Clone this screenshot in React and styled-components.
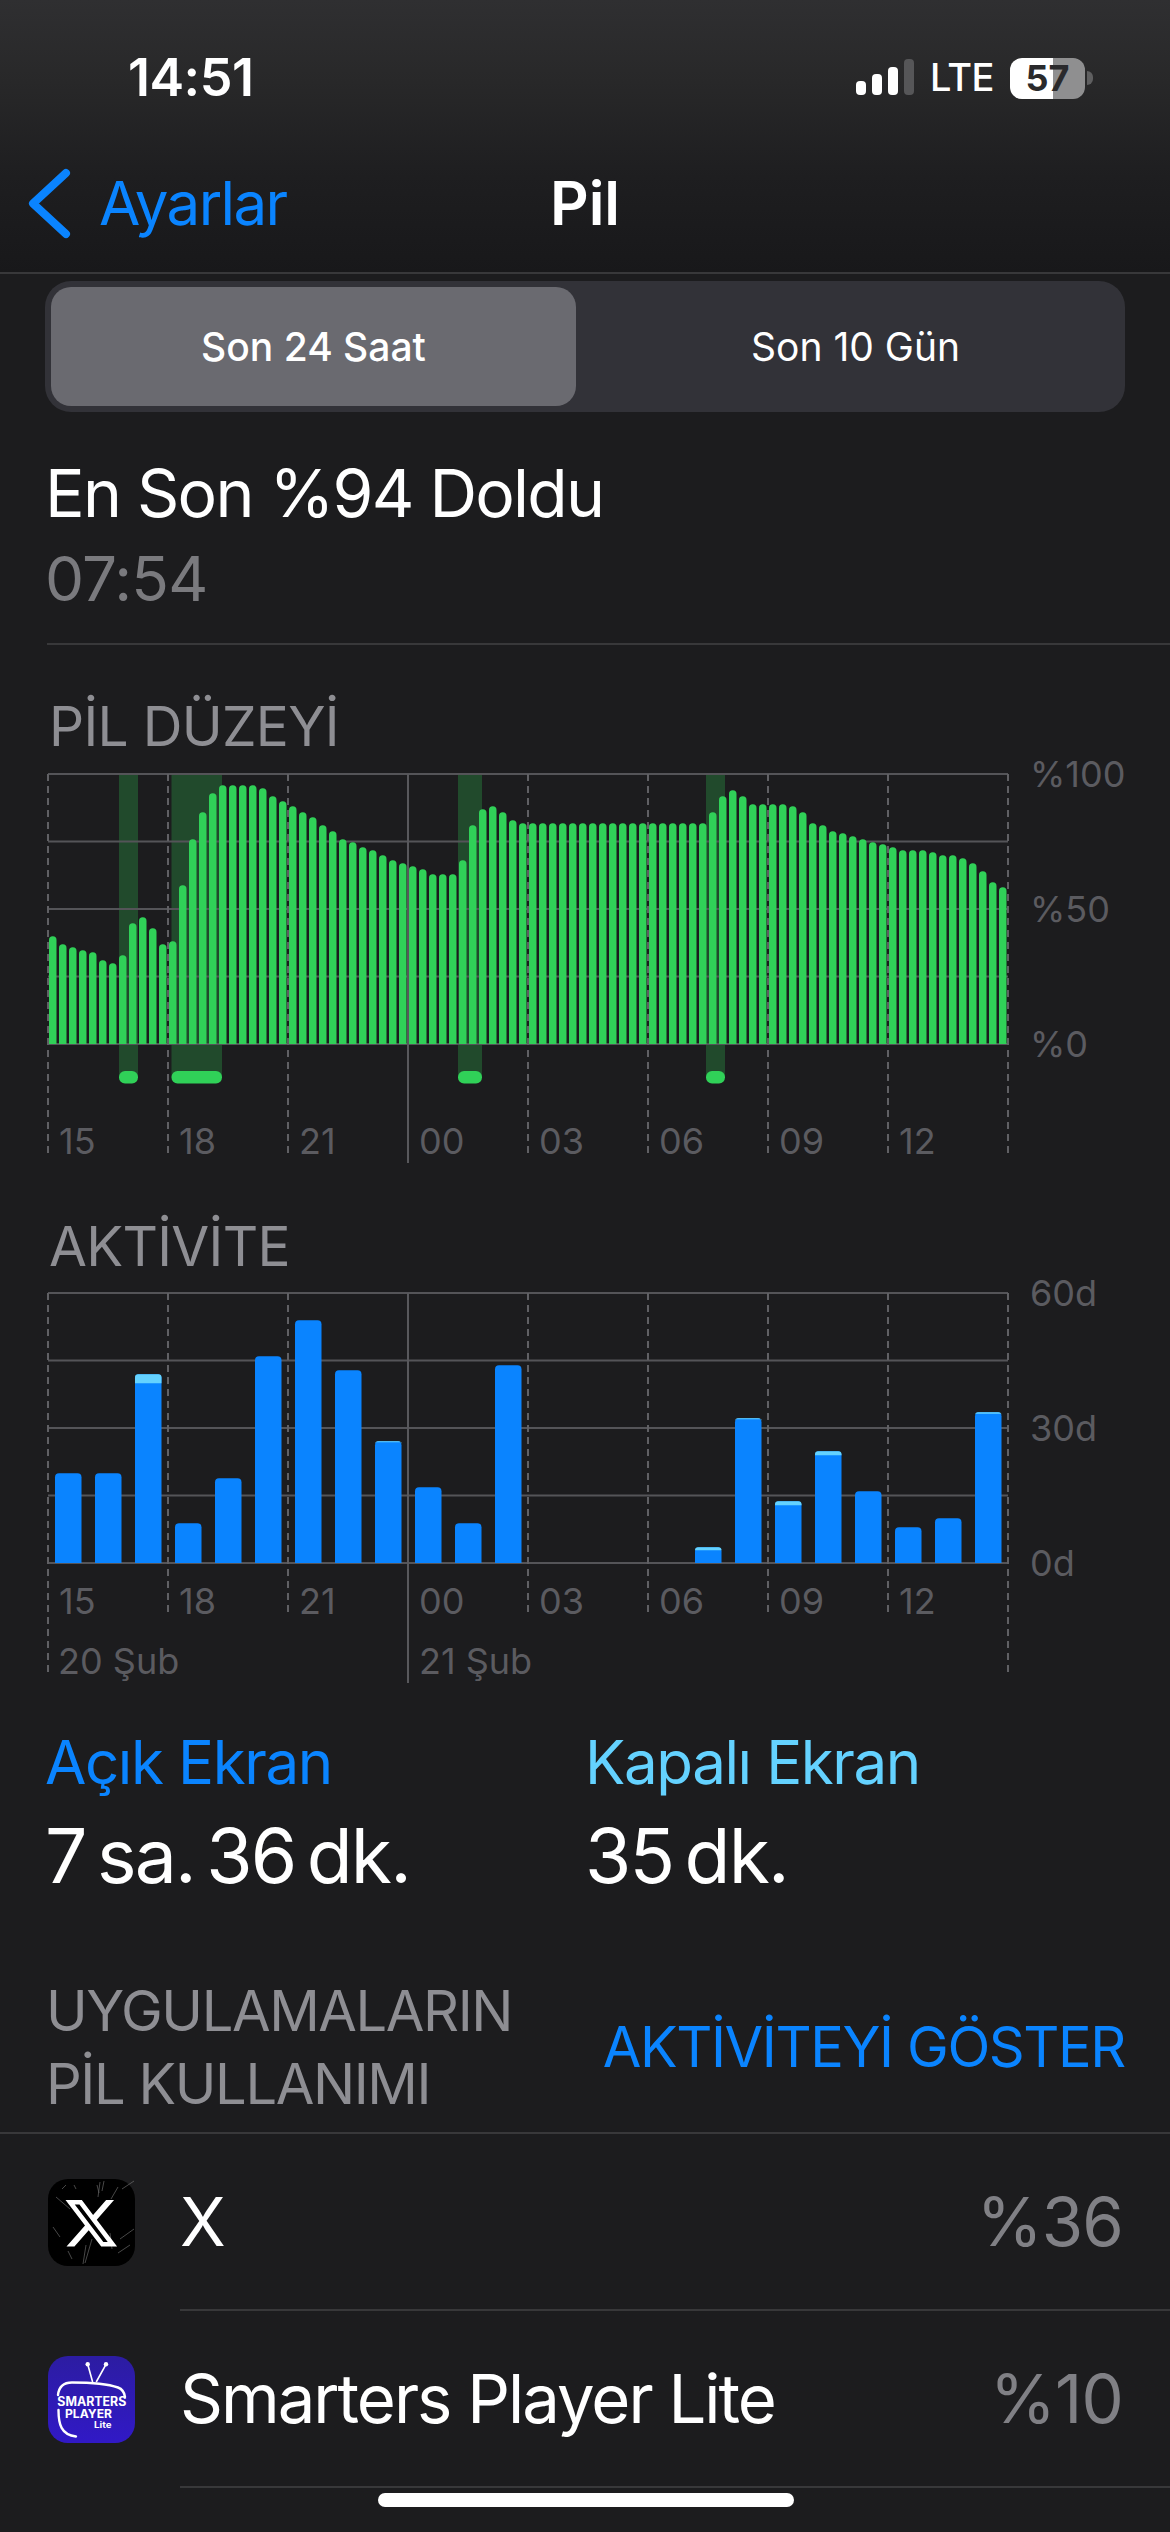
import React from "react";
import styled, { createGlobalStyle } from "styled-components";

const Global = createGlobalStyle`
  html, body { margin: 0; padding: 0; background: #1c1c1e; }
  * { box-sizing: border-box; }
`;

const FONT = `Inter, "Noto Sans", "Liberation Sans", sans-serif`;

const Page = styled.div`
  position: relative;
  width: 1170px;
  height: 2532px;
  overflow: hidden;
  background: #1c1c1e;
  color: #fff;
  font-family: ${FONT};
`;

const Header = styled.header`
  height: 274px;
  background: linear-gradient(180deg, #2f2f31 0%, #282829 30%, #1e1e20 65%, #18181a 100%);
  border-bottom: 2px solid #38383a;
`;

const StatusBar = styled.div`
  height: 152px;
  padding: 47px 0 0 128px;
  display: flex;
  justify-content: space-between;
`;

const Clock = styled.div`
  font-size: 52px;
  line-height: 62px;
  font-weight: 600;
  letter-spacing: -0.5px;
`;

const StatusIcons = styled.div`
  width: 229px;
  height: 42px;
  margin: 10px 85px 0 0;
  display: flex;
  align-items: flex-end;
`;

const SignalBars = styled.div`
  display: flex;
  align-items: flex-end;
  gap: 6px;
  height: 36px;
  margin-bottom: 4px;
`;

const SignalBar = styled.span`
  width: 10px;
  height: ${(p) => p.$h}px;
  border-radius: 4px;
  background: ${(p) => (p.$off ? "#565658" : "#fff")};
`;

const Lte = styled.span`
  margin-left: 16px;
  font-size: 38px;
  line-height: 42px;
  font-weight: 500;
  letter-spacing: -0.6px;
  height: 42px;
  transform: translateY(-1px);
`;

const Battery = styled.div`
  margin-left: auto;
  position: relative;
  width: 75px;
  height: 41px;
  border-radius: 12px;
  background: linear-gradient(90deg, #fff 0 57%, #8f8f90 57% 100%);
  color: #2a2a2c;
  font-size: 36px;
  font-weight: 700;
  line-height: 41px;
  text-align: center;
  &::after {
    content: "";
    position: absolute;
    right: -8px;
    top: 13px;
    width: 6px;
    height: 14px;
    border-radius: 0 7px 7px 0;
    background: #5f5f60;
  }
`;

const NavBar = styled.nav`
  position: relative;
  height: 120px;
  display: flex;
  align-items: flex-start;
  padding: 15px 0 0 26px;
`;

const BackChevron = styled.svg`
  width: 46px;
  height: 72px;
  display: block;
`;

const BackLabel = styled.span`
  margin-left: 27px;
  font-size: 60px;
  line-height: 72px;
  color: #0a84ff;
  letter-spacing: -1.6px;
`;

const NavTitle = styled.h1`
  position: absolute;
  left: 0;
  right: 0;
  top: 15px;
  margin: 0;
  text-align: center;
  font-size: 60px;
  line-height: 72px;
  font-weight: 600;
`;

const Segment = styled.div`
  margin: 7px 45px 0;
  height: 131px;
  padding: 6px;
  border-radius: 26px;
  background: #323238;
  display: grid;
  grid-template-columns: 525px 1fr;
`;

const SegmentItem = styled.div`
  display: flex;
  align-items: center;
  justify-content: center;
  border-radius: 20px;
  font-size: 39px;
  font-weight: ${(p) => (p.$active ? 500 : 400)};
  background: ${(p) => (p.$active ? "#6a6a70" : "transparent")};
  padding-left: ${(p) => (p.$active ? "0" : "16px")};
`;

const Summary = styled.section`
  margin-left: 47px;
  height: 233px;
  padding-top: 41px;
  border-bottom: 2px solid #38383a;
`;

const SummaryTitle = styled.div`
  margin-left: -2px;
  font-size: 66px;
  line-height: 80px;
  letter-spacing: -1.75px;
`;

const SummaryTime = styled.div`
  margin: 10px 0 0 -2px;
  font-size: 62px;
  line-height: 72px;
  color: #7a7a7e;
  letter-spacing: -0.8px;
`;

const SectionTitle = styled.h2`
  margin: 0;
  padding-left: 49px;
  font-size: 55px;
  line-height: 60px;
  font-weight: 400;
  color: #8e8e93;
  letter-spacing: -0.7px;
  height: ${(p) => p.$h}px;
  padding-top: ${(p) => p.$top}px;
`;

const ChartSvg = styled.svg`
  display: block;
  width: 1170px;
  height: 420px;
`;

const GridLine = styled.line`
  stroke: #545458;
  stroke-width: 2;
`;

const DashLine = styled.line`
  stroke: #606064;
  stroke-width: 2;
  stroke-dasharray: 7 5;
`;

const SolidVLine = styled.line`
  stroke: #58585c;
  stroke-width: 2;
`;

const AxisText = styled.text`
  font-family: ${FONT};
  font-size: 36px;
  fill: #5b5b60;
`;

const Band = styled.rect`
  fill: #214a2c;
`;

const Chip = styled.rect`
  fill: #30d158;
`;

const GreenBar = styled.path`
  fill: #30d158;
`;

const BlueBar = styled.path`
  fill: #0a84ff;
`;

const LightBar = styled.path`
  fill: #64d2ff;
`;

const Stats = styled.section`
  display: grid;
  grid-template-columns: 540px 1fr;
  padding: 38px 0 0 45px;
  height: 271px;
`;

const StatLabel = styled.div`
  font-size: 60px;
  line-height: 70px;
  color: ${(p) => p.$color};
  letter-spacing: -1.4px;
`;

const StatValue = styled.div`
  margin-top: 17px;
  font-size: 75px;
  line-height: 84px;
  font-weight: 400;
  letter-spacing: -1.8px;
  word-spacing: -8px;
`;

const UsageHead = styled.div`
  display: flex;
  align-items: center;
  justify-content: space-between;
  padding: 3px 45px 0 46px;
  height: 174px;
  border-bottom: 2px solid #38383a;
`;

const UsageTitle = styled.div`
  font-size: 56px;
  line-height: 73px;
  color: #8e8e93;
  letter-spacing: -1.4px;
`;

const UsageLink = styled.div`
  font-size: 56px;
  line-height: 71px;
  color: #0a84ff;
  letter-spacing: -1.4px;
`;

const AppRow = styled.div`
  display: flex;
  align-items: center;
  padding-left: 48px;
  height: 177px;
`;

const AppIcon = styled.svg`
  width: 87px;
  height: 87px;
  flex: none;
  display: block;
`;

const AppBody = styled.div`
  flex: 1;
  margin-left: 45px;
  height: 177px;
  display: flex;
  align-items: center;
  justify-content: space-between;
  padding-right: 47px;
  border-bottom: 2px solid #38383a;
`;

const AppName = styled.span`
  font-size: 67px;
  letter-spacing: -2px;
`;

const AppPercent = styled.span`
  font-size: 67px;
  color: #808085;
  letter-spacing: -0.8px;
`;

const HomeBar = styled.div`
  position: absolute;
  left: 378px;
  bottom: 25px;
  width: 416px;
  height: 14px;
  border-radius: 7px;
  background: #fff;
`;

const IconText = styled.text`
  font-family: ${FONT};
  font-weight: 700;
  fill: #fff;
`;

const BATTERY_TOPS = [
  769,793,802,811,817,841,850,826,730,712,745,793,784,616,478,397,340,316,316,316,316,325,349,364,
  379,397,412,436,454,478,487,502,511,526,541,550,559,568,583,583,583,541,436,388,379,397,421,430,
  430,430,430,430,430,430,430,430,430,430,430,430,430,430,430,430,430,430,397,349,331,349,373,373,
  373,373,379,397,430,436,454,460,469,478,487,493,502,511,511,511,517,526,526,535,550,574,607,622,
];

const ACTIVITY = [
  [819],[819],[522,549],[969],[834],[468],[360],[510],[723,726],[861],[969],[495],
  null,null,null,null,
  [1041,1050],[654,657],[903,915],[753,765],[873],[981],[954],[636,640],
];

const topRounded = (x, y, w, h, r) =>
  `M${x} ${y + h}V${y + r}Q${x} ${y} ${x + r} ${y}H${x + w - r}Q${x + w} ${y} ${x + w} ${y + r}V${y + h}Z`;

const HOURS = ["15", "18", "21", "00", "03", "06", "09", "12"];
const VX = [48, 168, 288, 408, 528, 648, 768, 888, 1008];
const TOP = 24;
const BASE = TOP + 270;

function ChartFrame({ bottoms, labelY, right, children, under }) {
  return (
    <>
      {under}
      {[0, 1, 2, 3, 4].map((i) => (
        <GridLine key={i} x1={48} x2={1008} y1={TOP + i * 67.5} y2={TOP + i * 67.5} />
      ))}
      {children}
      {VX.map((x, i) =>
        x === 408 ? (
          <SolidVLine key={x} x1={x} x2={x} y1={TOP} y2={bottoms.solid} />
        ) : (
          <DashLine key={x} x1={x} x2={x} y1={TOP} y2={i === 0 || i === 8 ? bottoms.edge : bottoms.inner} />
        )
      )}
      {HOURS.map((h, i) => (
        <AxisText key={h} x={VX[i] + 11} y={labelY}>{h}</AxisText>
      ))}
      {right.map((t, i) => (
        <AxisText key={t} x={1030} y={TOP + i * 135 + 13}>{t}</AxisText>
      ))}
    </>
  );
}

function BatteryChart() {
  const bands = [[119, 19], [171.5, 50.5], [458, 24], [706, 19]];
  return (
    <ChartSvg viewBox="0 0 1170 420">
      <ChartFrame
        bottoms={{ inner: 407, edge: 407, solid: 413 }}
        labelY={404}
        right={["%100", "%50", "%0"]}
        under={bands.map(([x, w]) => (
          <Band key={x} x={x} y={TOP} width={w} height={303} />
        ))}
      >
        {BATTERY_TOPS.map((t, i) => {
          const h = (1092 - t) / 3;
          return <GreenBar key={i} d={topRounded(49 + i * 10, BASE - h, 7.5, h, 3.7)} />;
        })}
        {bands.map(([x, w]) => (
          <Chip key={x} x={x} y={321} width={w} height={12.5} rx={6} />
        ))}
      </ChartFrame>
    </ChartSvg>
  );
}

function ActivityChart() {
  return (
    <ChartSvg viewBox="0 0 1170 420">
      <ChartFrame
        bottoms={{ inner: 348, edge: 408, solid: 414 }}
        labelY={345}
        right={["60d", "30d", "0d"]}
      >
        {ACTIVITY.map((v, i) => {
          if (!v) return null;
          const x = 55 + i * 40;
          const h = (1088 - v[0]) / 3;
          const y = BASE - h;
          return (
            <g key={i}>
              <BlueBar d={topRounded(x, y, 26.5, h, 4)} />
              {v[1] ? <LightBar d={`M${x} ${y + (v[1] - v[0]) / 3}V${y + 3}Q${x} ${y} ${x + 3} ${y}H${x + 23.5}Q${x + 26.5} ${y} ${x + 26.5} ${y + 3}V${y + (v[1] - v[0]) / 3}Z`} /> : null}
            </g>
          );
        })}
      </ChartFrame>
      <AxisText x={58} y={405}>20 Şub</AxisText>
      <AxisText x={419} y={405}>21 Şub</AxisText>
    </ChartSvg>
  );
}

const SCRATCHES = [
  "M52 3 L50 18 M56 2 L54 12 M49 6 L51 14", "M38 66 L35 85 M44 60 L37 84", "M70 8 L63 20 M74 10 L86 2",
  "M72 60 L86 50 M70 74 L82 66", "M8 18 L22 30 M5 48 L12 58", "M62 54 L64 70 M20 72 L24 80", "M26 6 L28 10 M14 10 L18 6",
];

function XIcon() {
  return (
    <AppIcon viewBox="0 0 87 87">
      <rect width="87" height="87" rx="20" fill="#000" />
      <g stroke="#8a8a8a" strokeWidth="0.7" fill="none" opacity="0.75">
        {SCRATCHES.map((d) => <path key={d} d={d} />)}
      </g>
      <path
        transform="translate(17.5 18.5) scale(2.15)"
        fill="#fff"
        d="M18.901 1.153h3.68l-8.04 9.19L24 22.846h-7.406l-5.8-7.584-6.638 7.584H.474l8.6-9.83L0 1.154h7.594l5.243 6.932ZM17.61 20.644h2.039L6.486 3.24H4.298Z"
      />
    </AppIcon>
  );
}

function SmartersIcon() {
  return (
    <AppIcon viewBox="0 0 87 87">
      <defs>
        <linearGradient id="sm" x1="0" y1="0" x2="0" y2="1">
          <stop offset="0" stopColor="#2c1ca2" />
          <stop offset="1" stopColor="#3119c6" />
        </linearGradient>
      </defs>
      <rect width="87" height="87" rx="20" fill="url(#sm)" />
      <g stroke="#fff" fill="none" strokeLinecap="round">
        <path d="M39.7 8.3 L44.5 25.5 M58 8.3 L48.5 25.5" strokeWidth="1.6" />
        <path d="M10 39 C11 30 16 26.5 24 26.5 C42 26.5 60 28 70 31.5 C74 33 76.5 37 77 41" strokeWidth="2.4" />
        <path d="M10.5 54 C10.5 68 13 79 28 80.5" strokeWidth="2.4" />
      </g>
      <circle cx="39.7" cy="8.3" r="2.2" fill="#fff" />
      <circle cx="58" cy="8.3" r="2.2" fill="#fff" />
      <IconText x="9.3" y="50" fontSize="12.5" textLength="69" lengthAdjust="spacingAndGlyphs">SMARTERS</IconText>
      <IconText x="17" y="62.3" fontSize="11.5" textLength="47" lengthAdjust="spacingAndGlyphs">PLAYER</IconText>
      <IconText x="46" y="72.3" fontSize="9" fontWeight="500" textLength="17.5" lengthAdjust="spacingAndGlyphs">Lite</IconText>
    </AppIcon>
  );
}

export default function App() {
  return (
    <Page>
      <Global />
      <Header>
        <StatusBar>
          <Clock>14:51</Clock>
          <StatusIcons>
            <SignalBars>
              <SignalBar $h={14} />
              <SignalBar $h={21} />
              <SignalBar $h={28} />
              <SignalBar $h={36} $off />
            </SignalBars>
            <Lte>LTE</Lte>
            <Battery>57</Battery>
          </StatusIcons>
        </StatusBar>
        <NavBar>
          <BackChevron viewBox="0 0 46 72">
            <path d="M40 6 L7 36.5 L40 67" fill="none" stroke="#0a84ff" strokeWidth="8" strokeLinecap="round" strokeLinejoin="round" />
          </BackChevron>
          <BackLabel>Ayarlar</BackLabel>
          <NavTitle>Pil</NavTitle>
        </NavBar>
      </Header>

      <Segment>
        <SegmentItem $active>Son 24 Saat</SegmentItem>
        <SegmentItem>Son 10 Gün</SegmentItem>
      </Segment>

      <Summary>
        <SummaryTitle>En Son %94 Doldu</SummaryTitle>
        <SummaryTime>07:54</SummaryTime>
      </Summary>

      <SectionTitle $h={105} $top={51}>PİL DÜZEYİ</SectionTitle>
      <BatteryChart />
      <SectionTitle $h={99} $top={46}>AKTİVİTE</SectionTitle>
      <ActivityChart />

      <Stats>
        <div>
          <StatLabel $color="#0a84ff">Açık Ekran</StatLabel>
          <StatValue>7 sa. 36 dk.</StatValue>
        </div>
        <div>
          <StatLabel $color="#64d2ff">Kapalı Ekran</StatLabel>
          <StatValue>35 dk.</StatValue>
        </div>
      </Stats>

      <UsageHead>
        <UsageTitle>UYGULAMALARIN<br />PİL KULLANIMI</UsageTitle>
        <UsageLink>AKTİVİTEYİ GÖSTER</UsageLink>
      </UsageHead>

      <AppRow>
        <XIcon />
        <AppBody>
          <AppName>X</AppName>
          <AppPercent>%36</AppPercent>
        </AppBody>
      </AppRow>
      <AppRow>
        <SmartersIcon />
        <AppBody>
          <AppName>Smarters Player Lite</AppName>
          <AppPercent>%10</AppPercent>
        </AppBody>
      </AppRow>
      <HomeBar />
    </Page>
  );
}
